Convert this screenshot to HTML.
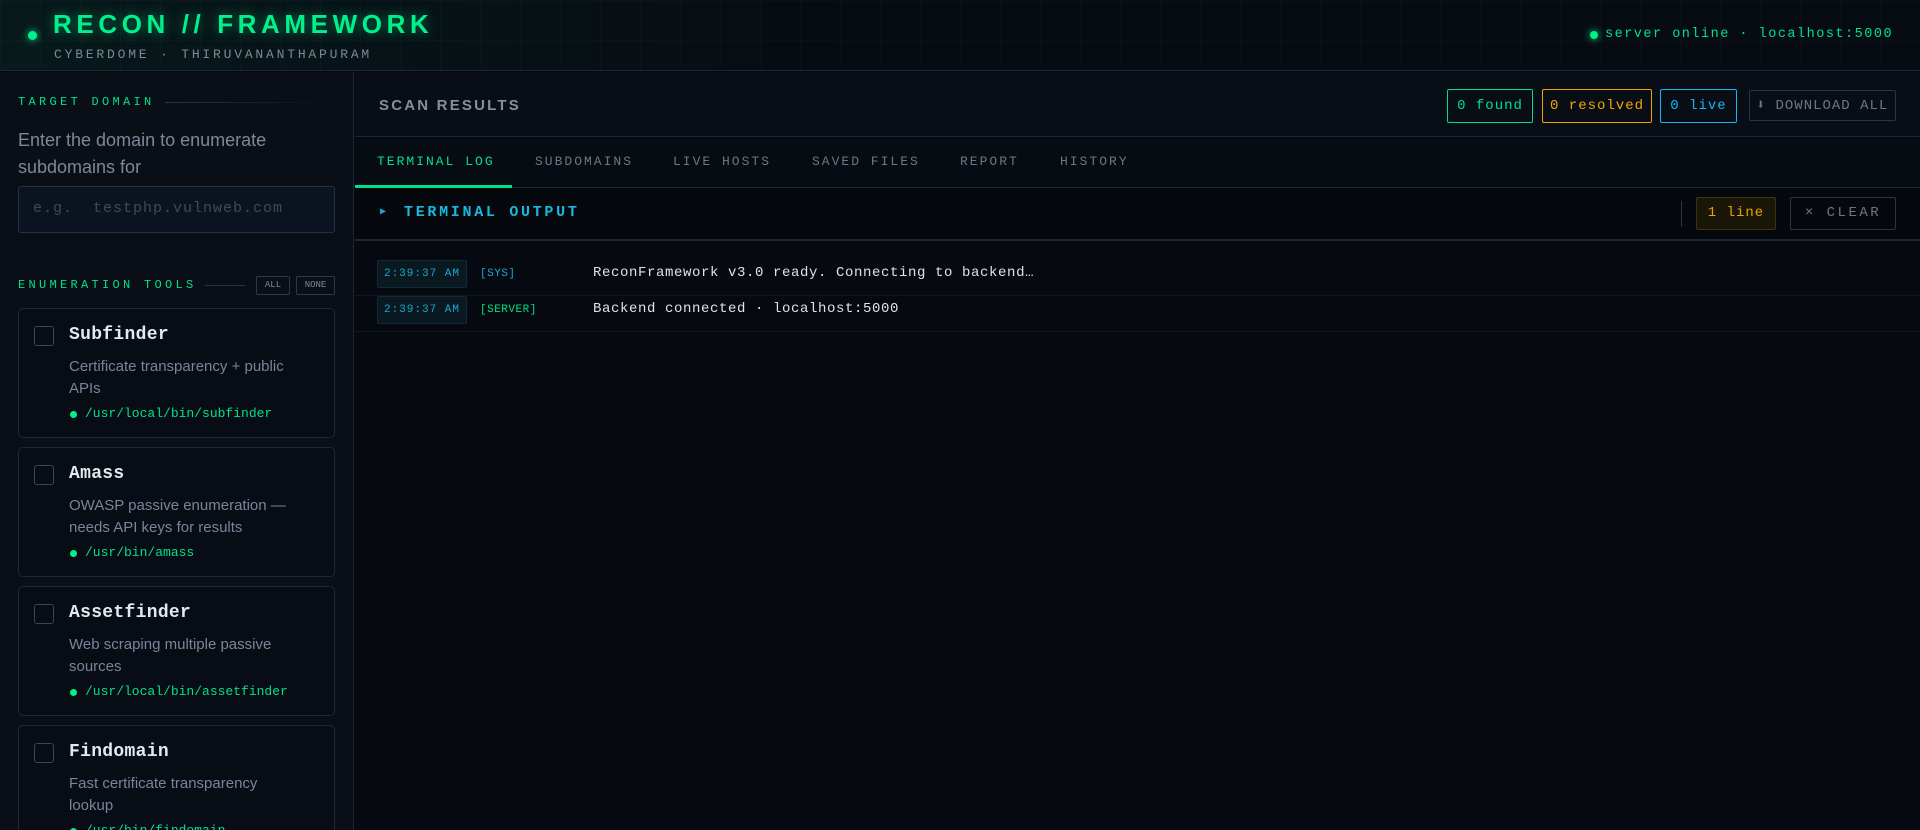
<!DOCTYPE html>
<html><head><meta charset="utf-8"><style>
*{box-sizing:border-box;margin:0;padding:0}
body{width:1920px;height:830px;overflow:hidden;background:#060910;font-family:"Liberation Mono",monospace;color:#c8d0da;position:relative}
.abs{position:absolute;white-space:nowrap}
#hdr{position:absolute;left:0;top:0;width:1920px;height:71px;border-bottom:1px solid #1c2635;
background-image:linear-gradient(90deg,rgba(0,255,160,0.06),rgba(0,0,0,0) 45%),linear-gradient(rgba(40,70,80,.09) 1px,transparent 1px),linear-gradient(90deg,rgba(40,70,80,.09) 1px,transparent 1px);background-size:100% 100%,40px 40px,40px 40px;background-color:#070b12}
.dot{position:absolute;border-radius:50%;background:#00f08c;box-shadow:0 0 8px #00f08c}
#side{position:absolute;left:0;top:72px;width:354px;height:758px;background:#0a0e17;border-right:1px solid #1c2635;overflow:hidden}
.lbl{position:absolute;font-size:12px;letter-spacing:3.3px;color:#00e08a}
.card{position:absolute;left:18px;width:317px;height:130px;border:1px solid #1e2838;border-radius:5px;background:#080c14}
.cb{position:absolute;left:15px;top:17px;width:20px;height:20px;border:1px solid #3a4556;border-radius:3px}
.nm{position:absolute;left:50px;top:16px;font-size:18px;font-weight:bold;color:#e4e9ef;letter-spacing:.3px}
.ds{position:absolute;left:50px;top:47px;width:232px;font-family:"Liberation Sans",sans-serif;font-size:15px;line-height:22px;color:#79859a}
.pt{position:absolute;left:66px;top:97px;font-size:13px;color:#00e08a}
.pt:before{content:"";position:absolute;left:-15px;top:5px;width:7px;height:7px;border-radius:50%;background:#00f08c}
.badge{position:absolute;top:89px;height:34px;border:1.5px solid;border-radius:2px;font-size:14px;letter-spacing:1px;display:flex;align-items:center;justify-content:center}
.tab{position:absolute;top:154px;font-size:13px;letter-spacing:2px;color:#6b7788}
.row{position:absolute;left:355px;width:1565px;height:36px;border-bottom:1px solid #10171f}
.ts{position:absolute;left:22px;top:0;width:90px;height:28px;background:#0a1820;border:1px solid #13283a;border-radius:2px;color:#1aa8d0;font-size:11px;letter-spacing:1px;display:flex;align-items:center;justify-content:center}
.tg{position:absolute;left:125px;top:8px;font-size:11px;letter-spacing:.5px}
.msg{position:absolute;left:238px;top:5px;font-size:14px;color:#dde3ea;letter-spacing:.6px}
</style></head><body>
<div id="hdr"></div>
<div class="dot" style="left:28px;top:31px;width:9px;height:9px"></div>
<div class="abs" style="left:53px;top:9px;font-family:'Liberation Sans',sans-serif;font-weight:bold;font-size:26px;letter-spacing:4.6px;color:#00f08c;text-shadow:0 0 12px rgba(0,240,140,.5)">RECON // FRAMEWORK</div>
<div class="abs" style="left:54px;top:47px;font-size:13px;letter-spacing:2.8px;color:#7d8898">CYBERDOME · THIRUVANANTHAPURAM</div>
<div class="dot" style="left:1590px;top:31px;width:8px;height:8px"></div>
<div class="abs" style="left:1605px;top:27px;font-size:13.5px;letter-spacing:1.5px;color:#00e08a">server online · localhost:5000</div>

<div id="side">
<div class="lbl" style="left:18px;top:23px">TARGET DOMAIN</div>
<div class="abs" style="left:165px;top:30px;width:165px;height:1px;background:linear-gradient(90deg,#2a3444,transparent)"></div>
<div class="abs" style="left:18px;top:55px;font-family:'Liberation Sans',sans-serif;font-size:18px;line-height:27px;color:#7d8898;white-space:normal;width:300px">Enter the domain to enumerate subdomains for</div>
<div class="abs" style="left:18px;top:114px;width:317px;height:47px;border:1px solid #243044;border-radius:3px;background:#0b1220;padding:13px 14px;font-size:15px;color:#3e4a5c;letter-spacing:1px">e.g.&nbsp; testphp.vulnweb.com</div>
<div class="lbl" style="left:18px;top:206px">ENUMERATION TOOLS</div>
<div class="abs" style="left:205px;top:213px;width:40px;height:1px;background:#2a3444"></div>
<div class="abs" style="left:256px;top:204px;width:34px;height:19px;border:1px solid #2e3848;border-radius:2px;font-size:9px;color:#7d8898;text-align:center;line-height:17px">ALL</div>
<div class="abs" style="left:296px;top:204px;width:39px;height:19px;border:1px solid #2e3848;border-radius:2px;font-size:9px;color:#7d8898;text-align:center;line-height:17px">NONE</div>
<div class="card" style="top:236px"><div class="cb"></div><div class="nm">Subfinder</div><div class="ds">Certificate transparency + public APIs</div><div class="pt">/usr/local/bin/subfinder</div></div>
<div class="card" style="top:375px"><div class="cb"></div><div class="nm">Amass</div><div class="ds">OWASP passive enumeration — needs API keys for results</div><div class="pt">/usr/bin/amass</div></div>
<div class="card" style="top:514px"><div class="cb"></div><div class="nm">Assetfinder</div><div class="ds">Web scraping multiple passive sources</div><div class="pt">/usr/local/bin/assetfinder</div></div>
<div class="card" style="top:653px"><div class="cb"></div><div class="nm">Findomain</div><div class="ds">Fast certificate transparency lookup</div><div class="pt">/usr/bin/findomain</div></div>
</div>

<div class="abs" style="left:355px;top:72px;width:1565px;height:65px;background:#090d15;border-bottom:1px solid #1c2635"></div>
<div class="abs" style="left:379px;top:97px;font-family:'Liberation Sans',sans-serif;font-weight:bold;font-size:15px;letter-spacing:2.2px;color:#8390a2">SCAN RESULTS</div>
<div class="badge" style="left:1447px;width:86px;border-color:#00e08a;color:#00e08a">0 found</div>
<div class="badge" style="left:1542px;width:110px;border-color:#f0a800;color:#f0a800">0 resolved</div>
<div class="badge" style="left:1660px;width:77px;border-color:#12b8ee;color:#12b8ee">0 live</div>
<div class="badge" style="left:1749px;width:147px;top:90px;height:31px;border:1px solid #2a3444;color:#6b7788;font-size:14px">⬇ DOWNLOAD ALL</div>

<div class="abs" style="left:355px;top:138px;width:1565px;height:50px;background:#070b12;border-bottom:1px solid #1c2635"></div>
<div class="abs" style="left:355px;top:185px;width:157px;height:3px;background:#00e08a"></div>
<div class="tab" style="left:377px;color:#00e08a">TERMINAL LOG</div>
<div class="tab" style="left:535px">SUBDOMAINS</div>
<div class="tab" style="left:673px">LIVE HOSTS</div>
<div class="tab" style="left:812px">SAVED FILES</div>
<div class="tab" style="left:960px">REPORT</div>
<div class="tab" style="left:1060px">HISTORY</div>

<div class="abs" style="left:355px;top:189px;width:1565px;height:52px;background:#05080d;border-bottom:2px solid #1c2635"></div>
<div class="abs" style="left:380px;top:206px;font-size:10px;color:#1aa8d0">▶</div>
<div class="abs" style="left:404px;top:204px;font-size:15px;font-weight:bold;letter-spacing:2.7px;color:#1ab8e0">TERMINAL OUTPUT</div>
<div class="abs" style="left:1681px;top:201px;width:1px;height:26px;background:#2a3444"></div>
<div class="abs" style="left:1696px;top:197px;width:80px;height:33px;background:#1a1608;border:1px solid #3e3210;border-radius:2px;color:#e8a400;font-size:14px;letter-spacing:1px;text-align:center;line-height:31px">1 line</div>
<div class="abs" style="left:1790px;top:197px;width:106px;height:33px;border:1px solid #2a3444;border-radius:2px;color:#6b7788;font-size:14px;letter-spacing:2.5px;text-align:center;line-height:31px">× CLEAR</div>

<div class="row" style="top:260px"><div class="ts">2:39:37 AM</div><div class="tg" style="color:#1aa8d0">[SYS]</div><div class="msg">ReconFramework v3.0 ready. Connecting to backend…</div></div>
<div class="row" style="top:296px"><div class="ts">2:39:37 AM</div><div class="tg" style="color:#00e08a">[SERVER]</div><div class="msg">Backend connected · localhost:5000</div></div>
</body></html>
